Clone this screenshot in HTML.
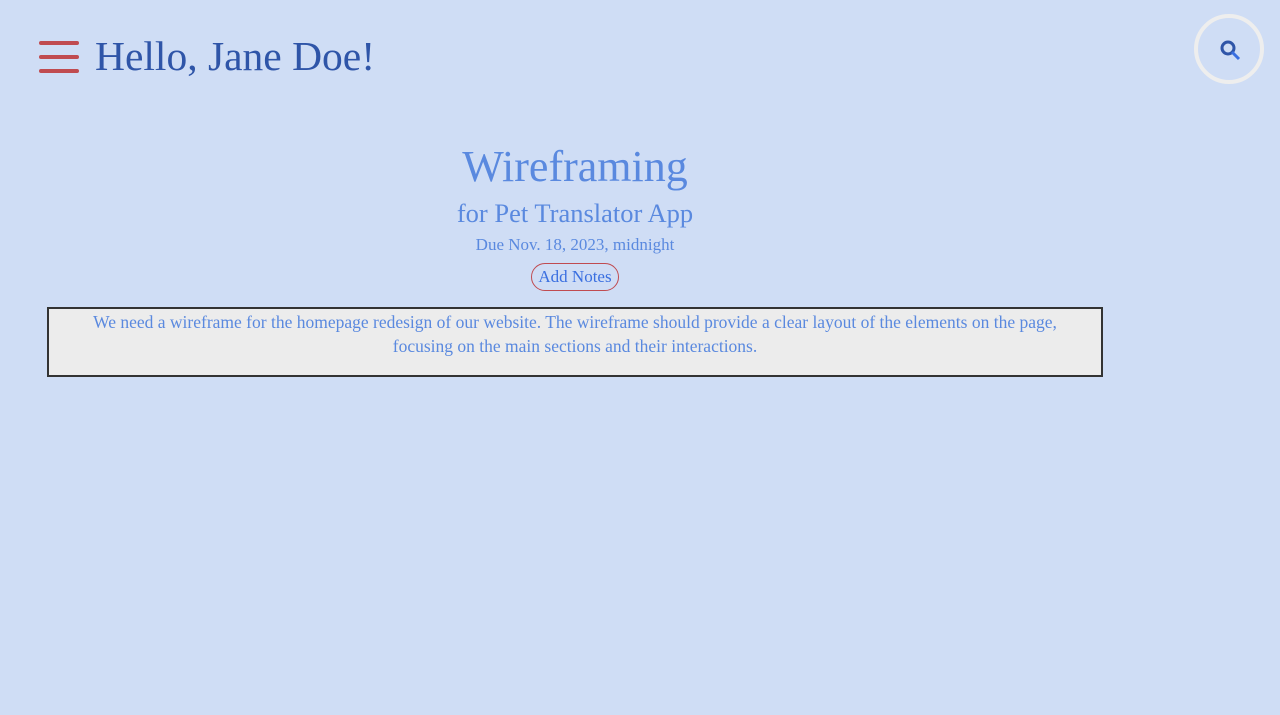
<!DOCTYPE html>
<html><head><style>
body{margin:0;width:1280px;height:715px;background:#cfddf5;font-family:"Liberation Serif",serif;position:relative;overflow:hidden}
.ham{position:absolute;left:39px;top:41px;width:40px}
.ham div{height:4px;background:#c04b50;border-radius:2px;margin-bottom:10px}
h1{position:absolute;left:95px;top:32px;margin:0;font-weight:normal;font-size:41.5px;color:#2f55a8}
.srch{position:absolute;left:1194px;top:14px;width:62px;height:62px;border:4px solid #eeeeee;border-radius:50%}
.c{position:absolute;left:0;width:1150px;text-align:center;color:#5a89df}
.box{position:absolute;left:47px;top:307px;width:1052px;height:65px;background:#ececec;border:2px solid #333;color:#5a89df;text-align:center;font-size:17.5px;line-height:24px;padding-top:1px;box-sizing:content-box}
.btn{display:inline-block;border:1px solid #c04b50;border-radius:14px;padding:3px 6px;color:#3a6fe0;font-size:17px}
</style></head><body>
<div class="ham"><div></div><div></div><div></div></div>
<h1>Hello, Jane Doe!</h1>
<div class="srch"><svg width="62" height="62" viewBox="0 0 62 62"><circle cx="30" cy="30" r="6" fill="none" stroke="#2f55a8" stroke-width="3"/><line x1="34" y1="34" x2="41" y2="41" stroke="#3a6fe0" stroke-width="3"/></svg></div>
<div class="c" style="top:141px;font-size:44px">Wireframing</div>
<div class="c" style="top:198px;font-size:26.5px">for Pet Translator App</div>
<div class="c" style="top:235px;font-size:17px">Due Nov. 18, 2023, midnight</div>
<div class="c" style="top:263px"><span class="btn">Add Notes</span></div>
<div class="box">We need a wireframe for the homepage redesign of our website. The wireframe should provide a clear layout of the elements on the page,<br>focusing on the main sections and their interactions.</div>
</body></html>
